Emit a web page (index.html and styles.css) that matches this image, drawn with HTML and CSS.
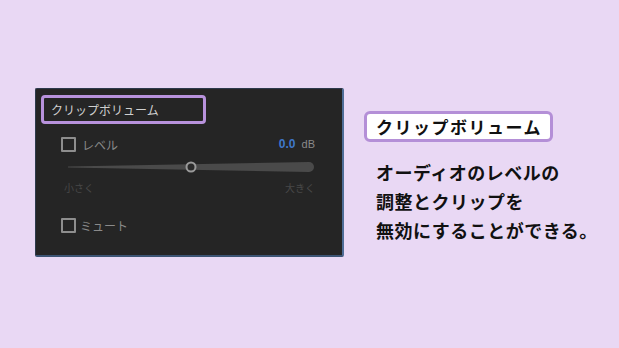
FILE: index.html
```html
<!DOCTYPE html>
<html>
<head>
    <title>クリップボリューム</title>
    <link rel="stylesheet" href="styles.css">
</head>
<body>
    <div class="scene">
        <div class="panel">
            <div class="panel-title">クリップボリューム</div>

            <div class="row level-row">
                <span class="check"></span>
                <span class="row-label">レベル</span>
                <span class="db"><b>0.0</b> dB</span>
            </div>

            <div class="slider">
                <svg width="250" height="14" viewBox="0 0 250 14">
                    <path d="M0 6.5 L241 2 A5 5 0 0 1 241 12 L0 7.5 Z" fill="#4a4a4a"/>
                    <circle cx="123" cy="7" r="4.5" fill="#2b2b2b" stroke="#9a9a9a" stroke-width="2"/>
                </svg>
            </div>

            <div class="slider-labels">
                <span>小さく</span>
                <span>大きく</span>
            </div>

            <div class="row mute-row">
                <span class="check"></span>
                <span class="row-label">ミュート</span>
            </div>
        </div>

        <div class="note">
            <div class="note-tag">クリップボリューム</div>
            <p class="note-text">オーディオのレベルの<br>調整とクリップを<br>無効にすることができる。</p>
        </div>
    </div>
</body>
</html>
```

FILE: styles.css
```css
body {
    margin: 0;
    background: #e9d8f4;
    font-family: "Noto Sans CJK JP", "Noto Sans", sans-serif;
}

.scene {
    display: flex;
    align-items: flex-start;
    gap: 20px;
    padding: 88px 0 0 35px;
}

.panel {
    width: 306px;
    height: 166px;
    background: #252525;
    border: 1px solid #2d3a4c;
    border-right: 2px solid #4f6d97;
    border-bottom: 2px solid #3c5474;
    border-radius: 2px;
    padding: 0;
    box-sizing: content-box;
}

.panel-title {
    width: 152px;
    height: 23px;
    margin: 6px 0 0 5px;
    padding-left: 7px;
    border: 3px solid #b892dc;
    border-radius: 4px;
    color: #d0d0d0;
    font-size: 12px;
    line-height: 23px;
}

.row {
    display: flex;
    align-items: center;
    padding: 0 27px 0 25px;
}

.level-row {
    margin-top: 12px;
    height: 16px;
}

.check {
    width: 11px;
    height: 11px;
    border: 2px solid #8e8e8e;
    border-radius: 1px;
}

.row-label {
    margin-left: 6px;
    color: #8a8a8a;
    font-size: 12px;
}

.db {
    margin-left: auto;
    color: #8a8a8a;
    font-size: 11px;
    font-family: "Liberation Sans", sans-serif;
}

.db b {
    color: #3f78c9;
    font-size: 12px;
    margin-right: 3px;
}

.slider {
    margin: 8px 0 0 32px;
    height: 14px;
}

.slider svg {
    display: block;
}

.slider-labels {
    display: flex;
    justify-content: space-between;
    margin: 6px 27px 0 28px;
    color: #484848;
    font-size: 10px;
}

.mute-row {
    margin-top: 22px;
    height: 16px;
}

.mute-row .row-label {
    margin-left: 4px;
}

.note {
    margin-top: 23px;
}

.note-tag {
    display: inline-block;
    padding: 0 8px 0 9px;
    height: 25px;
    line-height: 25px;
    background: #ffffff;
    border: 3px solid #b48fd7;
    border-radius: 6px;
    color: #111111;
    font-size: 17px;
    font-weight: 700;
    letter-spacing: 1.5px;
}

.note-text {
    margin: 16px 0 0 12px;
    color: #111111;
    font-size: 18px;
    font-weight: 700;
    line-height: 29px;
    letter-spacing: 0.5px;
}
```
